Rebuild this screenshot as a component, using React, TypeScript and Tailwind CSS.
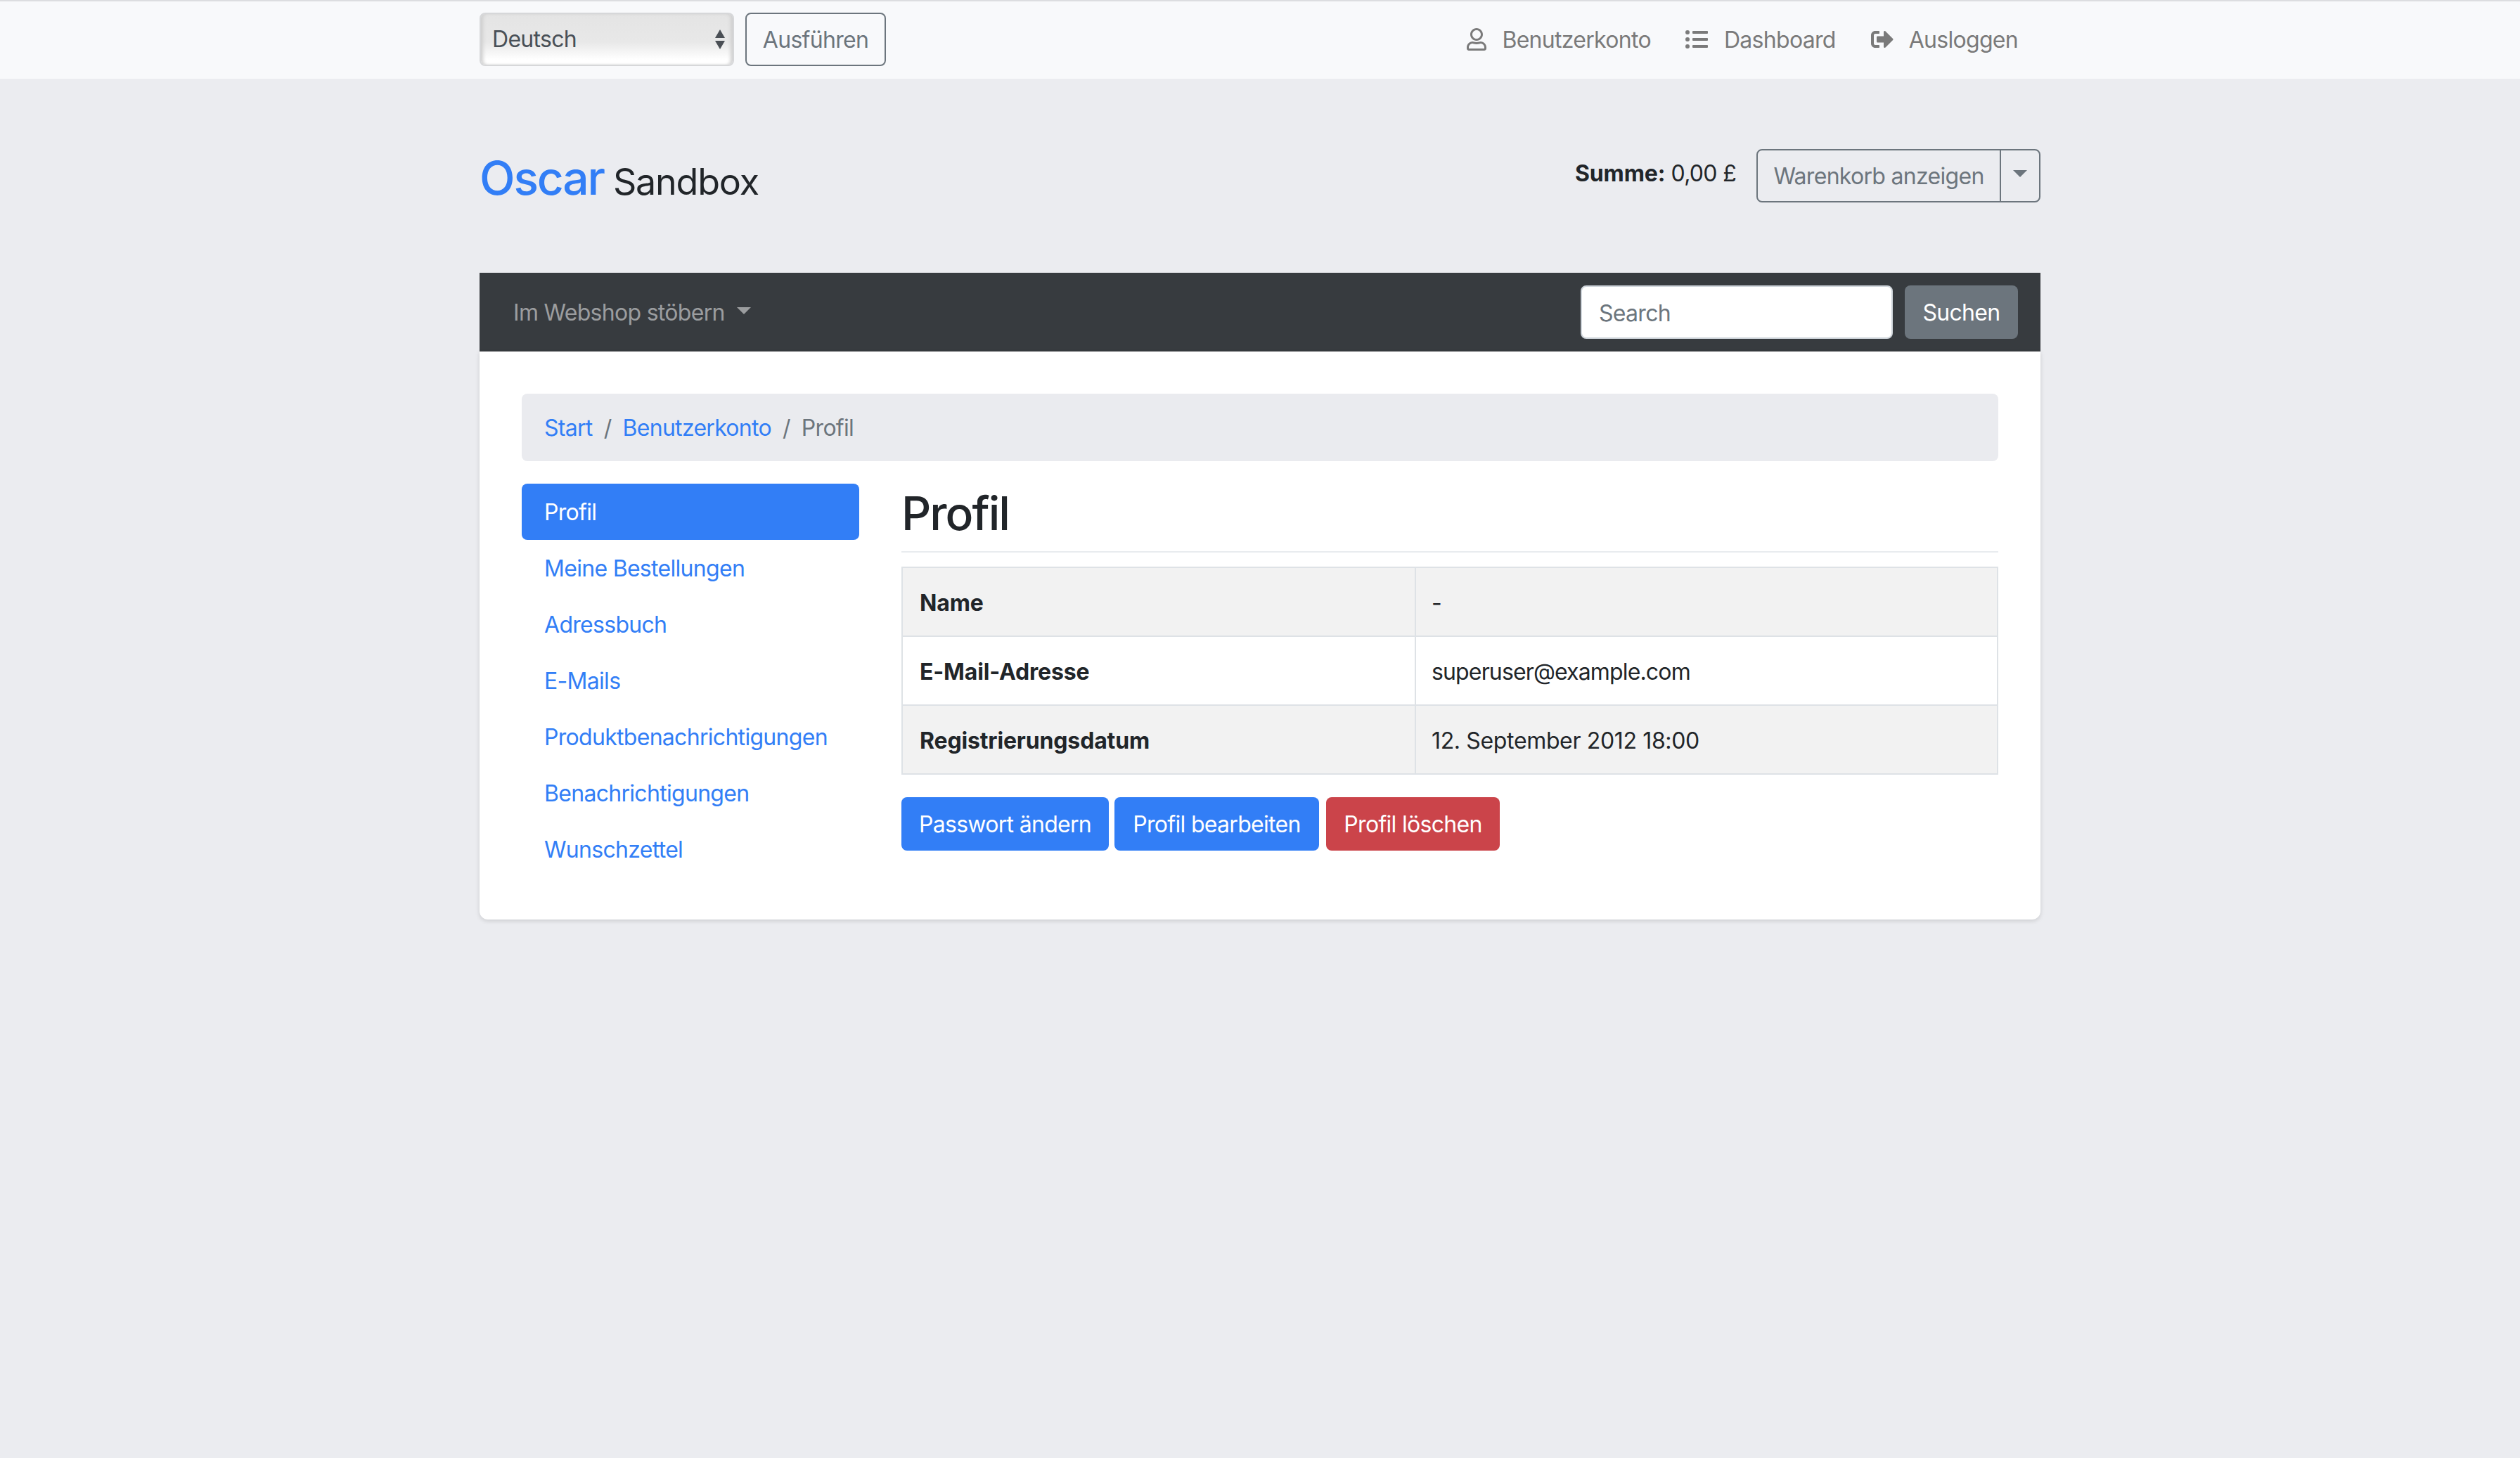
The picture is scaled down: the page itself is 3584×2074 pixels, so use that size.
import React from "react";
import { FaRegUser, FaListUl, FaSignOutAlt } from "react-icons/fa";

const sideItems = ["Meine Bestellungen", "Adressbuch", "E-Mails", "Produktbenachrichtigungen", "Benachrichtigungen", "Wunschzettel"];

function Caret({ className }: { className: string }) {
  return <span className={`inline-block w-0 h-0 border-x-[10px] border-x-transparent border-t-[10px] ${className}`} />;
}

export default function App() {
  return (
    <div className="min-h-[2074px] bg-[#ebecf0] font-['Inter','Liberation_Sans',sans-serif] text-[32px] leading-[48px] text-[#212529] tracking-[-0.7px]">
      <div className="h-[112px] bg-[#f8f9fb] border-t-2 border-[#dcdde0]">
        <div className="w-[2220px] mx-auto flex items-center justify-between pt-[16px]">
          <div className="flex items-center gap-[16px]">
            <div className="relative w-[362px] h-[76px]">
              <select
                defaultValue="Deutsch"
                className="appearance-none w-full h-full rounded-[8px] border-2 border-[#d6d7d9] pl-[16px] text-[#495057] bg-[linear-gradient(180deg,#e4e4e4_0%,#e8e8e8_55%,#ffffff_90%)] shadow-[inset_5px_0_5px_-2px_#cfcfcf,inset_-5px_0_5px_-2px_#cfcfcf]"
              >
                <option>Deutsch</option>
              </select>
              <svg className="absolute right-[12px] top-[23px] pointer-events-none" width="16" height="30" viewBox="0 0 16 30">
                <path d="M8 1 L15 13 H1 Z M1 17 H15 L8 29 Z" fill="#4a4f55" />
              </svg>
            </div>
            <button className="h-[76px] w-[200px] pt-[2px] rounded-[8px] border-2 border-[#6c757d] text-[#6c757d] text-center">Ausführen</button>
          </div>
          <div className="flex items-center text-[#7a7a7a] pr-[32px]">
            <FaRegUser className="w-[28px] h-[32px] mr-[22px]" />
            <span className="pt-[2px]">Benutzerkonto</span>
            <FaListUl className="w-[34px] h-[32px] ml-[48px] mr-[22px]" />
            <span className="pt-[2px]">Dashboard</span>
            <FaSignOutAlt className="w-[32px] h-[32px] ml-[50px] mr-[22px]" />
            <span className="pt-[2px]">Ausloggen</span>
          </div>
        </div>
      </div>

      <div className="w-[2220px] mx-auto">
        <header className="h-[276px] flex justify-between">
          <div className="pt-[109px] flex items-baseline gap-[13px] leading-[64px]">
            <a className="text-[66px] text-[#327ef6] font-medium tracking-[-2.2px]">Oscar</a>
            <span className="text-[52px] tracking-[-1.2px]">Sandbox</span>
          </div>
          <div className="pt-[100px] flex items-start">
            <div className="mr-[29px] pt-[11px]"><strong className="font-bold tracking-[-0.15px]">Summe:</strong> 0,00 £</div>
            <div className="flex h-[76px] rounded-[8px] border-2 border-[#6c757d] text-[#6c757d]">
              <span className="w-[346px] pt-[2px] flex items-center justify-center border-r-2 border-[#6c757d]">Warenkorb anzeigen</span>
              <span className="w-[54px] flex items-center justify-center pb-[6px]"><Caret className="border-t-[#6c757d]" /></span>
            </div>
          </div>
        </header>

        <nav className="h-[112px] bg-[#373b3f] flex items-center justify-between pl-[48px] pr-[32px]">
          <div className="flex items-center gap-[17px] text-[#9b9d9f]">
            <span className="pt-[2px]">Im Webshop stöbern</span>
            <Caret className="border-t-[#9b9d9f] mb-[4px]" />
          </div>
          <div className="flex gap-[17px]">
            <input
              placeholder="Search"
              className="w-[444px] h-[76px] pt-[2px] rounded-[8px] bg-white border-2 border-[#ced4da] px-[24px] placeholder:text-[#6c757d]"
            />
            <button className="w-[161px] h-[76px] pt-[2px] rounded-[8px] bg-[#6c757d] text-white">Suchen</button>
          </div>
        </nav>

        <main className="bg-white rounded-b-[12px] shadow-[0_2px_6px_rgba(0,0,0,0.14)] p-[60px]">
          <div className="h-[96px] pt-[2px] rounded-[8px] bg-[#eaebef] flex items-center px-[32px] mb-[32px]">
            <a className="text-[#327ef6]">Start</a>
            <span className="px-[16px] text-[#6c757d]">/</span>
            <a className="text-[#327ef6]">Benutzerkonto</a>
            <span className="px-[16px] text-[#6c757d]">/</span>
            <span className="text-[#6c757d]">Profil</span>
          </div>

          <div className="flex gap-[60px]">
            <aside className="w-[480px] shrink-0">
              <a className="flex items-center h-[80px] pt-[2px] px-[32px] rounded-[8px] bg-[#327ef6] text-white">Profil</a>
              {sideItems.map((s) => (
                <a key={s} className="flex items-center h-[80px] pt-[2px] px-[32px] text-[#327ef6]">{s}</a>
              ))}
            </aside>

            <section className="flex-1">
              <h1 className="h-[98px] text-[66px] leading-[84px] font-medium border-b-2 border-[#e9ecef] mb-[20px] tracking-[-2px]">Profil</h1>
              <table className="w-full border-collapse border-2 border-[#dee2e6] mb-[32px]">
                <tbody>
                  <tr className="bg-[#f2f2f2]">
                    <th className="w-[730px] border-2 border-[#dee2e6] pt-[26px] pb-[22px] px-[24px] text-left font-bold tracking-[-0.15px]">Name</th>
                    <td className="border-2 border-[#dee2e6] pt-[26px] pb-[22px] pl-[22px] pr-[24px] tracking-[-0.85px]">-</td>
                  </tr>
                  <tr>
                    <th className="border-2 border-[#dee2e6] pt-[26px] pb-[22px] px-[24px] text-left font-bold tracking-[-0.15px]">E-Mail-Adresse</th>
                    <td className="border-2 border-[#dee2e6] pt-[26px] pb-[22px] pl-[22px] pr-[24px] tracking-[-0.85px]">superuser@example.com</td>
                  </tr>
                  <tr className="bg-[#f2f2f2]">
                    <th className="border-2 border-[#dee2e6] pt-[26px] pb-[22px] px-[24px] text-left font-bold tracking-[-0.15px]">Registrierungsdatum</th>
                    <td className="border-2 border-[#dee2e6] pt-[26px] pb-[22px] pl-[22px] pr-[24px] tracking-[-0.35px]">12. September 2012 18:00</td>
                  </tr>
                </tbody>
              </table>
              <div className="flex">
                <a className="flex items-center justify-center w-[295px] h-[76px] pt-[2px] rounded-[8px] bg-[#327ef6] text-white">Passwort ändern</a>
                <a className="flex items-center justify-center w-[291px] h-[76px] pt-[2px] ml-[8px] rounded-[8px] bg-[#327ef6] text-white">Profil bearbeiten</a>
                <a className="flex items-center justify-center w-[247px] h-[76px] pt-[2px] ml-[10px] rounded-[8px] bg-[#cb444a] text-white">Profil löschen</a>
              </div>
            </section>
          </div>
        </main>
      </div>
    </div>
  );
}
